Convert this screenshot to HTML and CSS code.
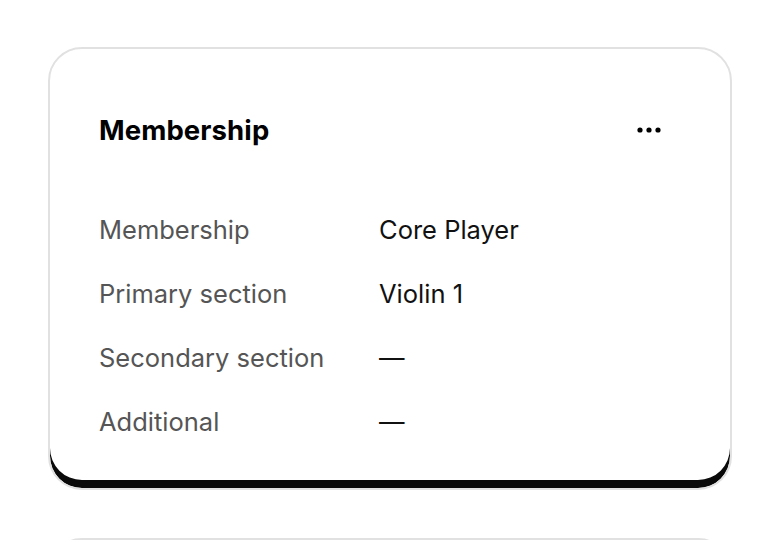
FILE: index.html
```html
<!DOCTYPE html>
<html lang="en">
<head>
    <meta charset="UTF-8">
    <meta name="viewport" content="width=device-width, initial-scale=1.0">
    <title>Membership</title>
    <link rel="stylesheet" href="styles.css">
</head>
<body>
    <div class="page">
        <section class="card">
            <div class="card-header">
                <h2>Membership</h2>
                <button class="more" aria-label="More options">
                    <svg width="26" height="6" viewBox="0 0 26 6">
                        <circle cx="3" cy="3" r="2.6"/>
                        <circle cx="12" cy="3" r="2.6"/>
                        <circle cx="21" cy="3" r="2.6"/>
                    </svg>
                </button>
            </div>
            <dl class="details">
                <dt>Membership</dt>
                <dd>Core Player</dd>
                <dt>Primary section</dt>
                <dd>Violin 1</dd>
                <dt>Secondary section</dt>
                <dd>—</dd>
                <dt>Additional</dt>
                <dd>—</dd>
            </dl>
        </section>
        <section class="card card-next"></section>
    </div>
</body>
</html>
```

FILE: styles.css
```css
html, body {
    margin: 0;
    overflow: hidden;
    background: #fff;
}
body {
    font-family: Inter, Lato, sans-serif;
    color: #111;
}
.page {
    display: flex;
    flex-direction: column;
    gap: 48px;
    padding: 47px 48px 0;
}
.card {
    border: 2px solid #e1e1e1;
    border-radius: 34px;
    background: #fff;
    box-shadow: inset 0 -8px 0 #0a0a0a; /* heavy bottom edge */
    padding: 0 49px 34px;
}
.card-next {
    height: 200px;
    box-shadow: none;
}
.card-header {
    display: flex;
    justify-content: space-between;
    align-items: center;
    padding-top: 65px;
    margin-bottom: 52px;
}
h2 {
    margin: 0;
    font-size: 27.5px;
    line-height: 32px;
    font-weight: 700;
    letter-spacing: 0.1px;
    color: #000;
}
.more {
    border: none;
    background: none;
    padding: 0;
    margin-right: 18px;
    display: flex;
    cursor: pointer;
}
.more svg {
    fill: #000;
}
.details {
    display: grid;
    grid-template-columns: 280px 1fr;
    grid-auto-rows: 64px;
    align-items: center;
    margin: 0;
    font-size: 25.5px;
    line-height: 64px;
}
.details dt {
    color: #555;
}
.details dd {
    margin: 0;
    color: #111;
}
```
